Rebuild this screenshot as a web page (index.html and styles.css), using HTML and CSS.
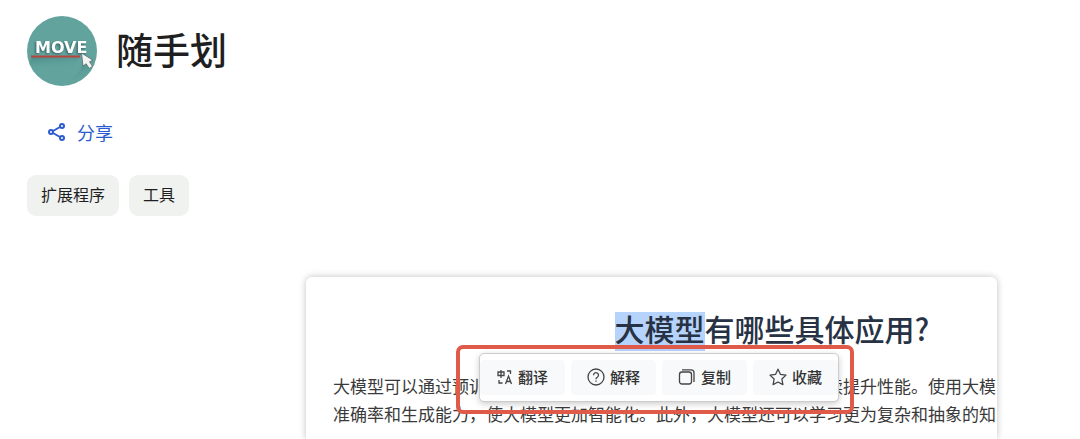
FILE: index.html
```html
<!DOCTYPE html>
<html lang="zh-CN">
<head>
    <meta charset="UTF-8">
    <meta name="viewport" content="width=device-width, initial-scale=1.0">
    <title>随手划</title>
    <link rel="stylesheet" href="styles.css">
</head>
<body>
    <header class="app-header">
        <svg class="logo" viewBox="0 0 70 70" role="img" aria-label="MOVE">
            <defs>
                <linearGradient id="shade" x1="0" y1="0" x2="0.4" y2="1">
                    <stop offset="0" stop-color="#2f6f6c" stop-opacity="0.7"/>
                    <stop offset="1" stop-color="#5b9e98" stop-opacity="0"/>
                </linearGradient>
                <clipPath id="round"><circle cx="35" cy="35" r="35"/></clipPath>
            </defs>
            <g clip-path="url(#round)">
                <rect width="70" height="70" fill="#63a39d"/>
                <path d="M5 41h48l-9 12H0z" fill="url(#shade)" opacity="0.7"/>
                <path d="M56 46l8 8-9 11-10-2 9-10z" fill="url(#shade)"/>
                <text class="logo-text" x="8" y="37">MOVE</text>
                <path d="M4 40.500h49" stroke="#b8443a" stroke-width="1.800"/>
                <path d="M54.500 37l1.500 13 3.200-2.200 3 4.700 3.300-2.200-3-4.600 3.500-1.400z" fill="#f4f4f4" stroke="#5a6a6c" stroke-width="0.8" stroke-linejoin="round"/>
            </g>
        </svg>
        <h1>随手划</h1>
    </header>

    <button type="button" class="share-btn">
        <svg class="share-icon" viewBox="0 0 18 18">
            <path d="M5 8l7-4M5 10l7 4"/>
            <circle cx="3" cy="9" r="2"/>
            <circle cx="14" cy="3" r="2"/>
            <circle cx="14" cy="15" r="2"/>
        </svg>
        分享
    </button>

    <nav class="tags">
        <a href="#" class="tag">扩展程序</a>
        <a href="#" class="tag">工具</a>
    </nav>

    <main class="preview">
        <div class="article">
            <h2><mark>大模型</mark>有哪些具体应用?</h2>
            <p>大模型可以通过预训练和微调来适应不同任务的需求，并且能够持续提升性能。使用大模<br>准确率和生成能力，使大模型更加智能化。此外，大模型还可以学习更为复杂和抽象的知</p>
        </div>

        <!-- Selection toolbar with highlight frame -->
        <div class="frame">
            <div class="toolbar">
                <button type="button" class="tool-btn">
                    <svg class="icon-small" viewBox="0 0 16 16">
                        <path d="M1 3h6v3.500H1zM4 1v8M10 2h3.500v3M2 11v3h3.500"/>
                        <path d="M8.500 15l3-8 3 8M9.500 12.500h4"/>
                    </svg>
                    翻译
                </button>
                <button type="button" class="tool-btn">
                    <svg viewBox="0 0 18 18">
                        <circle cx="9" cy="9" r="8"/>
                        <path d="M6.500 7.200a2.500 2.500 0 1 1 3.800 2.100C9.300 9.900 9 10.300 9 11.200M9 12.500v1.300"/>
                    </svg>
                    解释
                </button>
                <button type="button" class="tool-btn">
                    <svg viewBox="0 0 18 18">
                        <rect x="1.500" y="4" width="12" height="12" rx="2.500"/>
                        <path d="M4 1.800H13a3 3 0 0 1 3 3V14"/>
                    </svg>
                    复制
                </button>
                <button type="button" class="tool-btn">
                    <svg viewBox="0 0 18 18">
                        <path d="M9 1.200l2.400 5.100 5.600.8-4.100 3.900 1 5.600L9 14l-4.900 2.600 1-5.600L1 7.100l5.600-.8z" stroke-linejoin="round"/>
                    </svg>
                    收藏
                </button>
            </div>
        </div>
    </main>
</body>
</html>
```

FILE: styles.css
```css
* {
    margin: 0;
    padding: 0;
    box-sizing: border-box;
}

body {
    display: flex;
    flex-direction: column;
    align-items: flex-start;
    height: 100vh;
    padding: 16px 27px 0;
    overflow: hidden;
    background: #fff;
    color: #1f1f1f;
    font-family: "Noto Sans CJK SC", sans-serif;
}

button {
    border: none;
    background: none;
    font-family: inherit;
    cursor: pointer;
}

svg {
    flex: none;
    fill: none;
}

.app-header {
    display: flex;
    align-items: center;
    gap: 19px;
}

.logo {
    width: 70px;
    height: 70px;
}

.logo-text {
    fill: #fff;
    font-family: "DejaVu Sans", sans-serif;
    font-size: 16px;
    font-weight: 700;
    filter: drop-shadow(-1px 1px 1px #2f5f66);
}

h1 {
    padding-bottom: 4px;
    font-size: 37px;
    font-weight: 500;
    line-height: 66px;
}

.share-btn {
    display: flex;
    align-items: center;
    gap: 11px;
    margin-top: 31px;
    padding: 0 21px;
    color: #2b5bd0;
    font-size: 18px;
    line-height: 30px;
}

.share-icon {
    width: 18px;
    height: 18px;
    stroke: #2b5bd0;
    stroke-width: 2;
}

.tags {
    display: flex;
    gap: 10px;
    margin-top: 28px;
}

.tag {
    padding: 0 14px 2px;
    border-radius: 9px;
    background: #f0f2f0;
    color: #1f1f1f;
    font-size: 16px;
    line-height: 39px;
    text-decoration: none;
}

.preview {
    position: relative;
    flex: 1;
    align-self: stretch;
    margin: 61px 56px 0 279px;
    border-radius: 6px 6px 0 0;
    box-shadow: 0 0 7px rgba(0, 0, 0, 0.25);
}

.article {
    height: 100%;
    padding: 30px 0 0 27px;
    overflow: hidden;
    white-space: nowrap;
}

h2 {
    width: 878px;
    color: #273244;
    font-size: 30px;
    font-weight: 500;
    line-height: 42px;
    text-align: center;
}

mark {
    display: inline-block;
    padding-bottom: 6px;
    background: #b6d3fb;
    color: inherit;
    line-height: 33px;
}

.article p {
    margin-top: 21px;
    color: #3a3a3a;
    font-size: 17px;
    line-height: 28px;
}

.frame {
    position: absolute;
    top: 68px;
    left: 150px;
    padding: 4px 11px 8px 19px;
    border: 4px solid #e05a49;
    border-radius: 7px;
}

.toolbar {
    display: flex;
    gap: 6px;
    padding: 6px 0;
    border: 1px solid #ccc;
    border-radius: 5px;
    background: #fff;
    box-shadow: 0 2px 6px rgba(0, 0, 0, 0.2);
}

.tool-btn {
    display: flex;
    align-items: center;
    justify-content: center;
    gap: 5px;
    width: 85px;
    padding-bottom: 2px;
    border-radius: 4px;
    background: #f8f9fb;
    color: #333;
    font-size: 15px;
    font-weight: 500;
    line-height: 33px;
}

.tool-btn svg {
    width: 18px;
    height: 18px;
    stroke: #444;
    stroke-width: 1.3;
}

.tool-btn .icon-small {
    width: 16px;
    height: 16px;
}
```
